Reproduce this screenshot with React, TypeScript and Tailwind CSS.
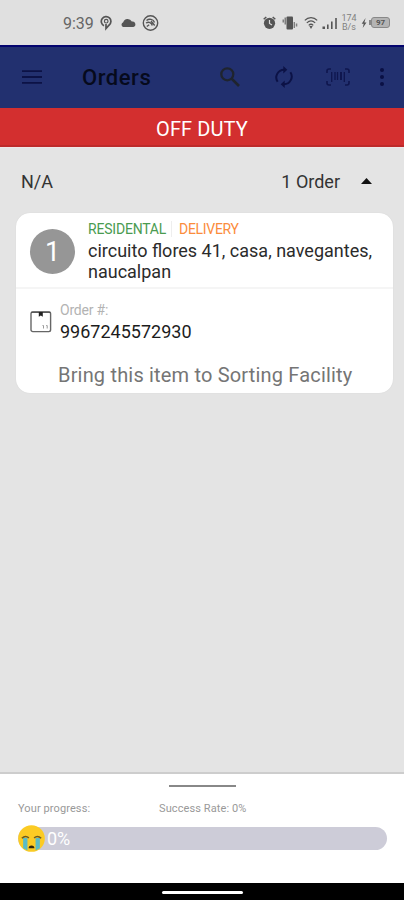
function StatusBar() {
  return (
    <div className="flex h-[45px] shrink-0 items-start bg-[#e0e0e0] pt-[14px] pr-[14px] pl-[63px] text-[#555]">
      <span className="w-[37px] pt-px text-[16px] leading-[18px] text-[#666]">9:39</span>
      <svg className="h-[18px] w-3" viewBox="0 0 12 18" fill="none" stroke="currentColor">
        <path d="M4 11.7A4.8 4.8 0 1 1 9 11.2L6 14.5V10" strokeWidth="1.7" />
        <circle cx="6.2" cy="7.2" r="1.8" strokeWidth="1.2" />
      </svg>
      <svg className="ml-2 h-[18px] w-4" viewBox="0 0 16 18" fill="currentColor">
        <path d="M3 13A2.6 2.6 0 0 1 3.2 8.2A4.6 4.6 0 0 1 11.8 7.6A2.8 2.8 0 0 1 13.3 13Z" />
      </svg>
      <svg className="ml-1.5 h-[18px] w-[17px]" viewBox="0 0 17 18" fill="none" stroke="currentColor">
        <circle cx="8.5" cy="9" r="7.2" strokeWidth="1.4" />
        <path d="M4.5 6.5C7 4.5 11.5 5 12.5 8.5M4 9C7 7.4 9.5 8.5 10.3 11.5M4.8 12.5L7.2 10.8M9 7L12.7 11.5" strokeWidth="1.4" />
      </svg>

      <svg className="ml-auto h-[18px] w-[13px]" viewBox="0 0 13 18">
        <circle cx="6.5" cy="9.3" r="5.6" fill="currentColor" />
        <path d="M.7 5.3L3.3 3M12.3 5.3L9.7 3" stroke="currentColor" strokeWidth="1.5" />
        <path d="M6.5 6v3.5L9 11" stroke="#ddd" strokeWidth="1.2" fill="none" />
      </svg>
      <svg className="ml-[6px] h-[18px] w-4" viewBox="0 0 16 18" fill="currentColor">
        <rect x="4.5" y="2.5" width="6.5" height="13" rx="1" />
        <path d="M2.5 3.5H4v7H2.5zM.5 5.5H2v3H.5zM11.6 8H13v6h-1.4zM13.8 9.5h1.5v3h-1.5z" opacity=".7" />
      </svg>
      <svg className="ml-[6px] h-[18px] w-[14px]" viewBox="0 0 14 18" fill="none" stroke="currentColor" strokeWidth="1.2">
        <path d="M.8 6.4C4.2 2.8 9.8 2.8 13.2 6.4M2.8 8.9C5.3 6.5 8.7 6.5 11.2 8.9M4.7 11.4C6 10.1 8 10.1 9.3 11.4" />
        <path d="M5.3 12h3.4L7 15z" fill="currentColor" stroke="none" />
      </svg>
      <svg className="ml-[4px] h-[18px] w-4" viewBox="0 0 16 18" fill="currentColor">
        <path d="M.5 12.5H3V15H.5zM5 10.5h1.6V15H5zM9 7.5h1.6V15H9zM13.2 4h1.6v11h-1.6z" />
      </svg>
      <div className="ml-[3px] flex h-[18px] w-[16px] flex-col text-center text-[9px] leading-[9px] text-[#808080]">
        <span>174</span>
        <span>B/s</span>
      </div>
      <svg className="ml-[4px] h-[18px] w-[6px]" viewBox="0 0 6 18" fill="currentColor">
        <path d="M4.6 4L.7 9.8h2L1.7 14 5.5 8.4H3.4z" />
      </svg>
      <div className="mt-[6px] ml-[2px] h-[5px] w-[2px] bg-[#888]" />
      <div className="mt-[3px] flex h-[11px] w-[19px] items-center justify-center rounded-[3px] border border-[#888] bg-[#b4b4b4] text-[8px] leading-none font-bold text-[#555]">
        97
      </div>
    </div>
  )
}

function AppBar() {
  return (
    <div className="flex h-[63px] shrink-0 items-center border-t-2 border-[#04046f] bg-[#22306f] pr-[20px] pb-px pl-[22px]">
      <svg className="h-4 w-5" viewBox="0 0 20 16" stroke="#0c1246" strokeWidth="1.8">
        <path d="M0 2.2h20M0 8h20M0 13.8h20" />
      </svg>
      <h1 className="ml-10 pt-[2px] text-[22px] leading-[26px] font-medium tracking-[0.55px] text-[#060a1c]">
        Orders
      </h1>
      <svg className="ml-auto h-5 w-5" viewBox="0 0 20 20" fill="none" stroke="#1f242e">
        <circle cx="7.3" cy="7.3" r="6" strokeWidth="2.3" />
        <path d="M11.6 11.6L19 19" strokeWidth="2.7" />
      </svg>
      <svg className="ml-[34px] h-[22px] w-[20px]" viewBox="0 0 20 22" fill="none" stroke="#0c1246" strokeWidth="2">
        <path d="M3.6 15.8A7.8 7.8 0 0 1 10 3.7M16.4 6.2A7.8 7.8 0 0 1 10 18.3" />
        <path d="M9.3 0v7.4L13.3 3.7zM10.7 14.6V22L6.7 18.3z" fill="#0c1246" stroke="none" />
      </svg>
      <svg className="ml-[32px] h-[18px] w-6" viewBox="0 0 24 18" fill="none" stroke="#0f164e">
        <path d="M1 5V3Q1 1 3 1h2M19 1h2q2 0 2 2v2M23 13v2q0 2-2 2h-2M5 17H3q-2 0-2-2v-2" strokeWidth="1.6" />
        <path d="M5.7 4v10M9 4v8M11.5 4v8M18.3 4v10" strokeWidth="1.3" />
        <path d="M15 4v8" strokeWidth="2" />
      </svg>
      <svg className="ml-[30px] h-[18px] w-1" viewBox="0 0 4 18" fill="#0a1044">
        <circle cx="2" cy="2.1" r="2" />
        <circle cx="2" cy="9" r="2" />
        <circle cx="2" cy="15.9" r="2" />
      </svg>
    </div>
  )
}

function OrderCard() {
  return (
    <div className="mr-[11px] ml-4 h-[180px] overflow-hidden rounded-[14px] bg-white shadow-[0_0_1px_#ccc]">
      <div className="flex h-[76px] border-b-2 border-[#f5f5f5] pl-[14px]">
        <div className="mt-4 flex size-[45px] items-center justify-center rounded-full bg-[#969696] pt-[2px] text-[27px] text-white">
          1
        </div>
        <div className="ml-[13px] pt-2">
          <div className="flex h-[19px] items-start text-[14px] leading-4">
            <span className="w-[83px] tracking-[-0.2px] text-[#4a9b50]">RESIDENTAL</span>
            <span className="mr-[7px] h-4 w-px bg-[#eee]" />
            <span className="tracking-[-0.3px] text-[#fb8c3c]">DELIVERY</span>
          </div>
          <p className="text-[18px] leading-[21px] whitespace-nowrap text-[#2b2b2b]">
            circuito flores 41, casa, navegantes,
            <br />
            naucalpan
          </p>
        </div>
      </div>
      <div className="flex h-[68px] pt-[13px] pl-[14px]">
        <svg className="mt-[9px] h-[22px] w-[22px]" viewBox="0 0 22 22" fill="none">
          <rect x="1" y="1" width="19.6" height="19.6" rx="1.8" stroke="#666" strokeWidth="1.4" />
          <path d="M1.2 1.2h19.2" stroke="#444" strokeWidth="1" />
          <path d="M8.8 1h4v4.8l-2-1.4-2 1.4z" fill="#222" />
          <path d="M13.5 14.5v3M17.2 14.5v3M12.5 15l1-1M16.2 15l1-1" stroke="#999" strokeWidth="1" />
        </svg>
        <div className="ml-2">
          <div className="text-[14px] leading-4 tracking-[-0.2px] text-[#b3b3b3]">Order #:</div>
          <div className="mt-[3px] text-[18px] leading-[21px] text-[#1c1c1c]">9967245572930</div>
        </div>
      </div>
      <p className="mt-[6px] pl-[42px] text-[20px] leading-6 tracking-[0.18px] whitespace-nowrap text-[#757575]">
        Bring this item to Sorting Facility
      </p>
    </div>
  )
}

function CryingFace() {
  return (
    <svg className="h-[27px] w-[27px] shrink-0" viewBox="0 0 28 28" fill="none">
      <circle cx="14" cy="14" r="13.8" fill="#fbcb24" />
      <path d="M5.3 13.5h4.5v13L5.3 24zM18.2 13.5h4.5V24l-4.5 2.5z" fill="#5bbcc6" />
      <path d="M4 13.8Q7.5 10.3 11.3 13.3M16.7 13.3Q20.5 10.3 24 13.8" stroke="#6b5a20" strokeWidth="1.6" />
      <path d="M11 24q0-2.7 3-2.7t3 2.7z" fill="#33270f" />
    </svg>
  )
}

function ProgressSheet() {
  return (
    <div className="flex h-[111px] shrink-0 flex-col border-t-2 border-[#cdcdcd] bg-white">
      <div className="mt-[11px] ml-[169px] h-[1.5px] w-[67px] bg-[#888]" />
      <div className="mt-[15px] flex h-[15px] pl-[18px] text-[11px] leading-[14px] text-[#999]">
        <span className="w-[141px] tracking-[0.1px]">Your progress:</span>
        <span className="tracking-[0.1px]">Success Rate: 0%</span>
      </div>
      <div className="mt-[10px] mr-[17px] ml-[18px] flex h-[23px] items-center rounded-full bg-[#cdccd8]">
        <CryingFace />
        <span className="ml-[2px] pt-px text-[18px] leading-[22px] text-white">0%</span>
      </div>
    </div>
  )
}

export default function App() {
  return (
    <div className="flex h-[900px] w-[404px] flex-col overflow-hidden bg-[#e4e4e4] font-['Roboto',sans-serif]">
      <StatusBar />
      <AppBar />
      <div className="flex h-[39px] shrink-0 items-center justify-center border-b-2 border-[#bd2a2a] bg-[#d32f2f] pt-[4px] text-[20px] tracking-[0.1px] text-white">
        OFF DUTY
      </div>
      <main className="flex-1">
        <div className="flex h-[66px] items-center border-t border-[#f0e6e8] pt-px pr-[32px] pl-[21px] text-[18px] text-[#333]">
          <span>N/A</span>
          <span className="ml-auto">1 Order</span>
          <svg className="ml-[21px] h-[6px] w-[11px]" viewBox="0 0 11 6">
            <path d="M0 6L5.5 0 11 6z" fill="#111" />
          </svg>
        </div>
        <OrderCard />
      </main>
      <ProgressSheet />
      <div className="flex h-[17px] shrink-0 justify-center bg-black pt-[8px]">
        <div className="h-[3px] w-[81px] rounded-full bg-white" />
      </div>
    </div>
  )
}
